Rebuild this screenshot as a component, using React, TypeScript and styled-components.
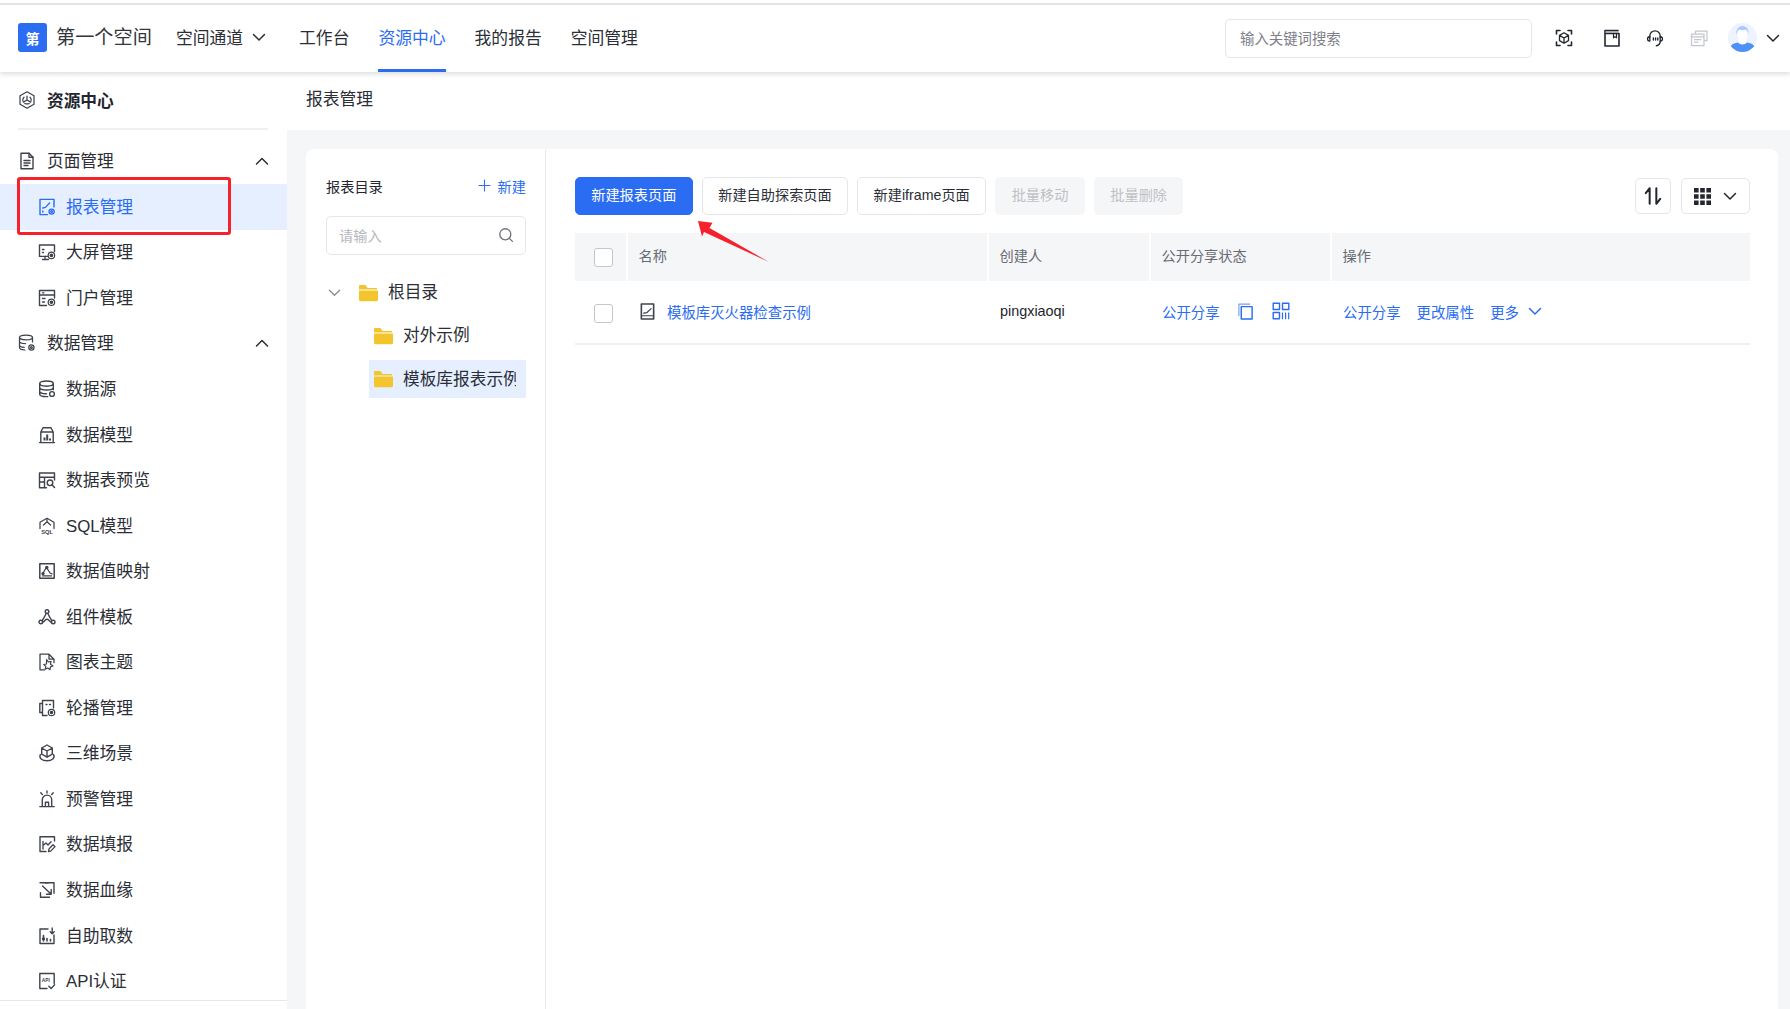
import React from 'react';
import styled, { createGlobalStyle } from 'styled-components';

const FONT = '"Liberation Sans", "Noto Sans CJK SC", sans-serif';
const BLUE = '#2a6cf2';
const TEXT = '#23262e';

const GlobalStyle = createGlobalStyle`
  html, body {
    margin: 0;
    height: 100%;
    overflow: hidden;
    background: #fff;
    font-family: ${FONT};
    color: ${TEXT};
  }
  * { box-sizing: border-box; }
`;

const Page = styled.div`
  position: relative;
  height: 1009px;
  display: flex;
  flex-direction: column;
  overflow: hidden;
`;

const TopBar = styled.header`
  position: relative;
  z-index: 2;
  height: 72px;
  flex: none;
  display: flex;
  align-items: center;
  padding: 3px 4px 0 18px;
  background: #fff;
  box-shadow: inset 0 3px 0 #fff, inset 0 5px 0 #e3e3e3, 0 2px 5px rgba(0, 0, 0, 0.14);
`;

const BrandMark = styled.div`
  width: 29px;
  height: 29px;
  border-radius: 3px;
  background: ${BLUE};
  color: #fff;
  font-size: 14px;
  font-weight: 700;
  display: flex;
  align-items: center;
  justify-content: center;
`;

const BrandName = styled.div`
  margin-left: 9px;
  padding-bottom: 3px;
  font-size: 19.2px;
  color: #33363d;
  white-space: nowrap;
`;

const NavLinks = styled.nav`
  display: flex;
  align-self: stretch;
  margin-left: 24px;
  gap: 29px;
`;

const NavLink = styled.a<{ $active?: boolean }>`
  display: flex;
  align-items: center;
  gap: 9px;
  font-size: 16.8px;
  padding-top: 2px;
  color: ${(p) => (p.$active ? BLUE : '#2b2e36')};
  border-bottom: 3px solid ${(p) => (p.$active ? BLUE : 'transparent')};
  white-space: nowrap;
`;

const NavCaret = styled.span`
  display: flex;
  margin-right: 4px;
`;

const SearchBox = styled.div`
  margin-left: auto;
  width: 307px;
  height: 39px;
  margin-top: 1px;
  border: 1px solid #e5e6eb;
  border-radius: 5px;
  display: flex;
  align-items: center;
  padding: 0 0 1px 14px;
  font-size: 14.4px;
  color: #7d8088;
`;

const TopIcons = styled.div`
  display: flex;
  align-items: center;
  margin-left: 8px;
  flex: none;
`;

const TopIconSlot = styled.div<{ $w: number }>`
  width: ${(p) => p.$w}px;
  display: flex;
  justify-content: center;
  flex: none;
`;

const Body = styled.div`
  flex: 1;
  min-height: 0;
  display: flex;
`;

const Sidebar = styled.aside`
  width: 287px;
  flex: none;
  display: flex;
  flex-direction: column;
  background: #fff;
`;

const SideTitle = styled.div`
  height: 58px;
  flex: none;
  margin: 0 19px 0 18px;
  display: flex;
  align-items: center;
  gap: 11px;
  font-size: 16.7px;
  font-weight: 700;
  border-bottom: 2px solid #eeeff1;
`;

const SideList = styled.div`
  flex: 1;
  min-height: 0;
  padding-top: 8.500px;
  overflow: hidden;
`;

const SideFoot = styled.div`
  height: 9px;
  flex: none;
  border-top: 1px solid #e8e8ea;
`;

const GroupRow = styled.div`
  height: 45.55px;
  display: flex;
  align-items: center;
  padding: 0 18px;
  gap: 11px;
  font-size: 16.7px;
  color: #2b2e36;
`;

const RowLabel = styled.span`
  padding-bottom: 2px;
`;

const GroupArrow = styled.span`
  margin-left: auto;
  display: flex;
`;

const SideRow = styled.div<{ $active?: boolean }>`
  height: 45.55px;
  display: flex;
  align-items: center;
  padding-left: 38px;
  gap: 10px;
  font-size: 16.8px;
  color: ${(p) => (p.$active ? BLUE : '#2b2e36')};
  background: ${(p) => (p.$active ? '#e6efff' : 'transparent')};
`;

const Workspace = styled.main`
  flex: 1;
  min-width: 0;
  display: flex;
  flex-direction: column;
  background: #f5f6f8;
`;

const Crumb = styled.div`
  height: 58px;
  flex: none;
  display: flex;
  align-items: center;
  padding: 0 0 6px 19px;
  background: #fff;
  font-size: 16.8px;
  color: #2b2e36;
`;

const Panel = styled.section`
  flex: 1;
  min-height: 0;
  display: flex;
  margin: 19px 12px 0 19px;
  background: #fff;
  border-radius: 8px 8px 0 0;
`;

const TreeColumn = styled.div`
  width: 240px;
  flex: none;
  padding: 28px 19px 0 20px;
  border-right: 1px solid #e9eaed;
`;

const TreeHead = styled.div`
  height: 20px;
  display: flex;
  align-items: center;
  justify-content: space-between;
  padding-bottom: 3px;
  font-size: 14.2px;
`;

const NewLink = styled.a`
  display: flex;
  align-items: center;
  gap: 6px;
  color: ${BLUE};
`;

const TreeSearch = styled.div`
  margin-top: 19px;
  height: 39px;
  border: 1px solid #e5e6eb;
  border-radius: 5px;
  display: flex;
  align-items: center;
  justify-content: space-between;
  padding: 0 11px 2px 12px;
  font-size: 14.2px;
  color: #b6b8bd;
`;

const TreeList = styled.div`
  margin-top: 18px;
  display: flex;
  flex-direction: column;
  gap: 5.3px;
`;

const TreeRow = styled.div<{ $depth: number; $active?: boolean }>`
  height: 38px;
  margin-left: ${(p) => (p.$depth ? 43 : 0)}px;
  padding-left: ${(p) => (p.$depth ? 5 : 2)}px;
  display: flex;
  align-items: center;
  font-size: 16.7px;
  color: #2b2e36;
  white-space: nowrap;
  overflow: hidden;
  background: ${(p) => (p.$active ? '#e6efff' : 'transparent')};
`;

const TreeCaret = styled.span`
  display: flex;
  color: #8d9097;
  margin-right: 18px;
`;

const TreeText = styled.span`
  margin-left: 10px;
  width: 113px;
  padding-bottom: 2px;
  overflow: hidden;
  flex: none;
`;

const Content = styled.div`
  flex: 1;
  min-width: 0;
  padding: 28px 28px 0 29px;
`;

const Toolbar = styled.div`
  display: flex;
  align-items: center;
  gap: 9.500px;
`;

const Button = styled.button<{ $kind?: 'primary' | 'disabled' }>`
  height: 38px;
  padding: 0 15.200px 4px;
  border-radius: 5px;
  font-family: inherit;
  font-size: 14.2px;
  white-space: nowrap;
  border: 1px solid ${(p) => (p.$kind === 'primary' ? BLUE : p.$kind === 'disabled' ? '#f5f6f8' : '#e5e6eb')};
  background: ${(p) => (p.$kind === 'primary' ? BLUE : p.$kind === 'disabled' ? '#f5f6f8' : '#fff')};
  color: ${(p) => (p.$kind === 'primary' ? '#fff' : p.$kind === 'disabled' ? '#bfc1c6' : '#2b2e36')};
`;

const ToolRight = styled.div`
  margin-left: auto;
  display: flex;
  gap: 10px;
`;

const IconButton = styled.div<{ $w: number }>`
  width: ${(p) => p.$w}px;
  height: 36px;
  border: 1px solid #e5e6eb;
  border-radius: 5px;
  display: flex;
  align-items: center;
  justify-content: center;
  gap: 12px;
  color: #23262e;
`;

const Grid = styled.div`
  display: grid;
  grid-template-columns: 51px 361px 162px 181px 1fr;
`;

const TableHead = styled(Grid)`
  margin-top: 18px;
  height: 48px;
  border-radius: 3px 3px 0 0;
  font-size: 14.2px;
  color: #686b73;
`;

const HeadCell = styled.div`
  background: #f5f6f8;
  display: flex;
  align-items: center;
  padding: 0 0 4px 10.500px;
  border-left: 2px solid #fff;
  &:first-child { border-left: 0; padding: 0 0 0 19px; }
`;

const TableRow = styled(Grid)`
  height: 64px;
  border-bottom: 2px solid #eeeff1;
  font-size: 14.4px;
`;

const Cell = styled.div`
  display: flex;
  align-items: center;
  padding: 0 0 2px 13px;
  gap: 16px;
  &:first-child { padding: 2px 0 0 19px; }
`;

const Checkbox = styled.span`
  width: 19px;
  height: 19px;
  border: 1px solid #c4c6cb;
  border-radius: 3px;
  background: #fff;
`;

const Link = styled.a`
  color: ${BLUE};
  white-space: nowrap;
`;

const NameCell = styled(Cell)`
  gap: 11px;
  padding-left: 13px;
`;

const IconGroup = styled.span`
  display: flex;
  align-items: center;
  gap: 18px;
  margin-left: 1px;
  color: ${BLUE};
`;

const MoreLink = styled(Link)`
  display: flex;
  align-items: center;
  gap: 9px;
`;

const HighlightBox = styled.div`
  position: absolute;
  left: 17px;
  top: 177px;
  width: 214px;
  height: 58px;
  border: 3px solid #f5222d;
  border-radius: 3px;
  pointer-events: none;
  z-index: 3;
`;

const ArrowMark = styled.svg`
  position: absolute;
  left: 694px;
  top: 217px;
  width: 80px;
  height: 50px;
  z-index: 3;
`;

const Svg = styled.svg<{ $size?: number }>`
  width: ${(p) => p.$size ?? 18}px;
  height: ${(p) => p.$size ?? 18}px;
  flex: none;
  fill: none;
  stroke: currentColor;
  stroke-width: 1.25;
  stroke-linecap: round;
  stroke-linejoin: round;
  display: block;
`;

const IconTone = styled.span<{ $color?: string }>`
  display: flex;
  color: ${(p) => p.$color ?? '#3f434d'};
`;

const gear = (cx: number, cy: number) => (
  <>
    <circle cx={cx} cy={cy} r="2.6" />
    <circle cx={cx} cy={cy} r="0.9" />
  </>
);

const icons: Record<string, React.ReactNode> = {
  hex: (
    <>
      <path d="M9 .8 16 4.800v8.400L9 17.200 2 13.200V4.800z" />
      <path d="M9 9V5M9 9l-3.600 2.100M9 9l3.600 2.100" />
      <path d="M6 6.200C4.800 7.400 4.500 9 5 10.200M12 6.200c1.200 1.200 1.500 2.800 1 4M6.800 12.500c1.400.6 3 .6 4.400 0" />
    </>
  ),
  page: (
    <>
      <path d="M3 1.200h8l4 4V16.800H3z" strokeWidth="1.4" />
      <path d="M11 1.200v4h4M6 8.500h6M6 11h6M6 13.500h4" strokeWidth="1.4" />
    </>
  ),
  report: (
    <>
      <path d="M9.500 16.600H2V1.400h14v7.500" strokeWidth="1.4" />
      <path d="M4.800 10l2.600-.6 4.200-4.400M4.800 12.800v1.400" strokeWidth="1.3" />
      {gear(13.600, 13.600)}
    </>
  ),
  screen: (
    <>
      <path d="M9.500 13.400H1.500V2h15v6.500" strokeWidth="1.4" />
      <path d="M4.500 16.500h6M7 13.400v3M4.500 6.500h1.500M4.500 9.500h1" strokeWidth="1.3" />
      <circle cx="13.400" cy="12.400" r="3.200" />
      <circle cx="13.400" cy="12.400" r="1.200" fill="currentColor" />
    </>
  ),
  portal: (
    <>
      <path d="M8.500 16.500H1.500V1.500h15v7.500" strokeWidth="1.4" />
      <path d="M1.500 6h15M4.500 3.800h1.500M4.500 9.500h2.500M4.500 13h2" strokeWidth="1.3" />
      <circle cx="13.400" cy="13.200" r="3.200" />
      <circle cx="13.400" cy="13.200" r="1.200" fill="currentColor" />
    </>
  ),
  dbGear: (
    <>
      <ellipse cx="8" cy="3.400" rx="6.500" ry="2.400" />
      <path d="M1.500 3.400v10.200c0 1.300 2.400 2.300 5.500 2.400M14.500 3.400v4.500M1.500 7.200c0 1.300 2.400 2.400 6 2.400M1.500 11c0 1.200 2 2.200 4.800 2.300" />
      {gear(13.400, 13.400)}
    </>
  ),
  db: (
    <>
      <ellipse cx="8.500" cy="3.600" rx="6.800" ry="2.600" strokeWidth="1.4" />
      <path d="M1.700 3.600v10.600c0 1.400 2.600 2.400 6.800 2.400h1.300M15.300 3.600v6M1.700 7.500c0 1.400 2.800 2.500 6.800 2.500s6.800-1.100 6.800-2.500M1.700 11.300c0 1.400 2.800 2.500 6.800 2.500" strokeWidth="1.4" />
      <circle cx="14" cy="14" r="2.400" strokeWidth="1.4" />
    </>
  ),
  model: (
    <>
      <path d="M1.500 16.600h15M2.800 16.600V6L5 1.800h8L15.200 6v10.600M2.800 6h12.400" strokeWidth="1.4" />
      <path d="M6.500 14.500v-3M9.200 14.500V8.500M12 14.500v-2" strokeWidth="2" strokeLinecap="butt" />
    </>
  ),
  tablePreview: (
    <>
      <path d="M16.500 9V2H1.500v14.800h7M1.500 6.200h15M6.500 6.200v10.600M1.500 11h5" strokeWidth="1.4" />
      <circle cx="12" cy="11.800" r="2.800" strokeWidth="1.4" />
      <path d="M14.200 14l2.300 2.500" strokeWidth="1.5" />
    </>
  ),
  sql: (
    <>
      <path d="M2 11.500V5.200L9 1.200l7 4v6.300" />
      <path d="M5.500 8 9 4.800 12.500 8M9 1.500v3.300" />
      <text x="3.200" y="17.200" fontSize="5.800" fontWeight="700" stroke="none" fill="currentColor" fontFamily={FONT}>SQL</text>
    </>
  ),
  mapping: (
    <>
      <path d="M1.800 1.800h14.400v14.400H1.800z" strokeWidth="1.5" />
      <path d="M4.500 13.800h9M5 11.200 8 6M8.500 5.500l3.500 5.500 2 .8" strokeWidth="1.3" />
      <circle cx="5" cy="11.600" r="1.100" fill="currentColor" />
      <circle cx="8.800" cy="5.500" r="1.100" fill="currentColor" />
    </>
  ),
  nodes: (
    <>
      <circle cx="9" cy="3.600" r="1.800" strokeWidth="1.4" />
      <circle cx="2.800" cy="14" r="1.800" strokeWidth="1.4" />
      <circle cx="15.200" cy="14" r="1.800" strokeWidth="1.4" />
      <path d="M8.200 5.500 6 9.600 4.200 12.600M9.800 5.500 12 9.600l1.800 3M4.800 14.300c1-.2 1.500-1.400 2.600-2.400 1-.8 2.300-.8 3.200 0 1.100 1 1.600 2.200 2.600 2.400" strokeWidth="1.4" />
    </>
  ),
  theme: (
    <>
      <path d="M6.500 16.800H2V1.200h9l5 5v3.500M11 1.200v5h5" strokeWidth="1.3" />
      <path d="M8.500 6.500l1.800 2.300 2.800-.3-.6 2.700 2.500 1.800-2.500.9-.5 2.800-2.200-1.700-2.600 1.100.6-2.700-2-1.900 2.700-.5z" strokeWidth="1.2" />
    </>
  ),
  carousel: (
    <>
      <path d="M9 16.500H4.500V1.500h11V9M4.500 4.500H1.800v9h2.700" strokeWidth="1.4" />
      <path d="M8 5.500h1M11.500 5.500h1" strokeWidth="1.3" />
      <circle cx="13.500" cy="13.500" r="3.200" />
      <circle cx="13.500" cy="13.500" r="1.200" fill="currentColor" />
    </>
  ),
  cube: (
    <>
      <path d="M9 1l5.300 3v6.200L9 13.200 3.700 10.200V4zM3.700 4 9 7l5.300-3M9 7v6.200" strokeWidth="1.4" />
      <path d="M2.400 10.500C.6 14 4 16.800 9 16.800s8.400-2.800 6.600-6.300" strokeWidth="1.4" />
    </>
  ),
  alarm: (
    <>
      <path d="M1.800 16.600h14.400M4.300 16.600V9.800a4.700 4.700 0 0 1 9.400 0v6.800M7.400 16.600v-4.400h3.200v4.400" strokeWidth="1.4" />
      <path d="M9 1v2M2.800 2.800l1.500 1.700M15.200 2.800l-1.500 1.700" strokeWidth="1.4" />
    </>
  ),
  fill: (
    <>
      <path d="M16.500 6V1.800H2V16.500h6" strokeWidth="1.4" />
      <path d="M5 6.500v7.500M5 10.500 8 8l2 2 3-3.200" strokeWidth="1.3" />
      <path d="M10.500 16.500l.5-2.600 4-4.200 2 1.900-4 4.300z" strokeWidth="1.3" />
    </>
  ),
  lineage: (
    <>
      <path d="M11.500 16.200H2.500v-4.500M7 1.800h9v10.500" strokeWidth="1.4" />
      <path d="M2 1.800h8M4.500 5l8.500 8M13.200 8.500v4.800H8.500" strokeWidth="1.4" />
    </>
  ),
  fetch: (
    <>
      <path d="M10 2H2v14.500h14V8" strokeWidth="1.4" />
      <path d="M5.500 14V8.500M9 14v-2.500M12.500 14v-1.500" strokeWidth="1.6" />
      <circle cx="5.500" cy="11.800" r="1" fill="currentColor" />
      <path d="M14.200 1v5.500M12.200 4.800l2 2 2-2" strokeWidth="1.4" />
    </>
  ),
  api: (
    <>
      <path d="M9 16.500H1.800V1.500h14.400v10" strokeWidth="1.4" />
      <text x="3.800" y="10" fontSize="4.800" fontWeight="700" stroke="none" fill="currentColor" fontFamily={FONT}>API</text>
      <path d="M10.800 14.300l2.300 2.300 3.500-3.800" strokeWidth="1.4" />
    </>
  ),
  cubeScan: (
    <>
      <path d="M1.500 5V1.500H5M13 1.500h3.500V5M1.500 13v3.500H5M16.500 13v3.500H13" strokeWidth="1.6" />
      <path d="M9 3.800l4.500 2.600v5.200L9 14.200l-4.500-2.600V6.400zM4.500 6.400 9 9l4.500-2.600M9 9v5.200" strokeWidth="1.3" />
    </>
  ),
  book: (
    <>
      <path d="M2 4.500h14V17H2zM2 4.500V1.500h13" strokeWidth="1.6" />
      <path d="M2.500 3h13" strokeWidth="1" stroke="#8a8d95" />
      <path d="M10.500 4.500v4.300l1.500-1 1.500 1V4.500" strokeWidth="1.200" />
    </>
  ),
  headset: (
    <>
      <path d="M3.800 8.500V7a5.200 5.200 0 0 1 10.400 0v1.500" strokeWidth="1.3" />
      <path d="M3.800 7.500C2.400 7.800 1.500 8.800 1.500 10s.9 2 2.300 2.200zM14.200 7.500c1.400.3 2.300 1.300 2.300 2.500s-.9 2-2.300 2.200z" strokeWidth="1.3" />
      <path d="M14.200 12.500c0 2.400-1.500 3.800-3.800 4.300M7.400 9v2M9.600 9v2M11.800 9v2" strokeWidth="1.4" />
    </>
  ),
  stack: (
    <path d="M5.500 4.800V2H17v9.500h-3M1.500 5H14v11.500H1.500zM1.500 7.800H14M4.500 10.500h6.500M4.500 13.200H8" />
  ),
  copy: (
    <>
      <path d="M2 13.500V1.200h11.500" strokeWidth="1.200" opacity="0.65" />
      <path d="M4.500 3.800h11.500v13.200H4.500z" strokeWidth="1.500" />
    </>
  ),
  qr: (
    <>
      <path d="M1.200 1.200h6.300v6.300H1.200zM10.500 1.200h6.300v6.300h-6.300zM1.200 10.500h6.300v6.300H1.200z" strokeWidth="1.400" />
      <path d="M10.500 10.500v6.800M13.600 10.500v6.800M16.700 10.500v6.800" strokeWidth="1.200" strokeLinecap="butt" />
    </>
  ),
  search: (
    <>
      <circle cx="8.200" cy="8.200" r="6.200" strokeWidth="1.500" />
      <path d="M12.800 12.800 16.200 16.200" strokeWidth="1.500" />
    </>
  ),
  plus: <path d="M9 2.500v13M2.500 9h13" strokeWidth="1.300" />,
  sheet: (
    <>
      <path d="M2.500 1h13v16h-13z" strokeWidth="1.700" />
      <path d="M2.500 13.500h13M5 10.800l3.200-.5L12.800 6" strokeWidth="1.300" />
    </>
  ),
};

const Icon: React.FC<{ name: string; size?: number }> = ({ name, size }) => (
  <Svg viewBox="0 0 18 18" $size={size}>
    {icons[name]}
  </Svg>
);

const Chevron: React.FC<{ up?: boolean; size?: number }> = ({ up, size = 14 }) => (
  <Svg viewBox="0 0 14 14" $size={size}>
    <path d={up ? 'M1.500 10 7 4.500l5.500 5.500' : 'M1.500 4.500 7 10l5.500-5.500'} strokeWidth="1.500" />
  </Svg>
);

const FolderSvg = styled.svg`
  width: 19px;
  height: 19px;
  flex: none;
`;

const Folder: React.FC = () => (
  <FolderSvg viewBox="0 0 19 19">
    <path d="M0 3.200C0 2.500.5 2 1.200 2h4.600c.5 0 .9.2 1.200.6L8.600 5H18v1.400H0z" fill="#f3c52c" />
    <path d="M0 7.400h19v9.400c0 .9-.6 1.400-1.400 1.400H1.400C.6 18.200 0 17.700 0 16.800z" fill="#f3c52c" />
  </FolderSvg>
);

const Avatar: React.FC = () => (
  <svg viewBox="0 0 29 29" width="29" height="29">
    <defs>
      <clipPath id="avatar-clip">
        <circle cx="14.500" cy="14.500" r="14.500" />
      </clipPath>
    </defs>
    <g clipPath="url(#avatar-clip)">
      <rect width="29" height="29" fill="#edf3ff" />
      <path d="M1 29c0-6 3-8.500 9-9.500 2 2.500 7 2.500 9 0 6 1 9 3.500 9 9.500z" fill="#4d90f8" />
      <path d="M10.800 14h7.400v5.500c-1.800 2.200-5.600 2.200-7.400 0z" fill="#fff" />
      <ellipse cx="14.500" cy="11.500" rx="5" ry="6.500" fill="#fff" />
      <path d="M8.500 12c-1-5.500 2-9 6-9s7 3.500 6 9c-.5-3-1-4.800-2.500-5.500-2.500 1-5 1-7 0-1.500.7-2 2.500-2.500 5.500z" fill="#a9c8ff" />
    </g>
  </svg>
);

const pageItems = [
  { label: '报表管理', icon: 'report', active: true },
  { label: '大屏管理', icon: 'screen' },
  { label: '门户管理', icon: 'portal' },
];

const dataItems = [
  { label: '数据源', icon: 'db' },
  { label: '数据模型', icon: 'model' },
  { label: '数据表预览', icon: 'tablePreview' },
  { label: 'SQL模型', icon: 'sql' },
  { label: '数据值映射', icon: 'mapping' },
  { label: '组件模板', icon: 'nodes' },
  { label: '图表主题', icon: 'theme' },
  { label: '轮播管理', icon: 'carousel' },
  { label: '三维场景', icon: 'cube' },
  { label: '预警管理', icon: 'alarm' },
  { label: '数据填报', icon: 'fill' },
  { label: '数据血缘', icon: 'lineage' },
  { label: '自助取数', icon: 'fetch' },
  { label: 'API认证', icon: 'api' },
];

const SideItem: React.FC<{ label: string; icon: string; active?: boolean }> = ({ label, icon, active }) => (
  <SideRow $active={active}>
    <IconTone $color={active ? BLUE : undefined}>
      <Icon name={icon} />
    </IconTone>
    <RowLabel>{label}</RowLabel>
  </SideRow>
);

const App: React.FC = () => {
  return (
    <Page>
      <GlobalStyle />
      <TopBar>
        <BrandMark>第</BrandMark>
        <BrandName>第一个空间</BrandName>
        <NavLinks>
          <NavLink>
            空间通道
            <NavCaret><Chevron /></NavCaret>
          </NavLink>
          <NavLink>工作台</NavLink>
          <NavLink $active>资源中心</NavLink>
          <NavLink>我的报告</NavLink>
          <NavLink>空间管理</NavLink>
        </NavLinks>
        <SearchBox>输入关键词搜索</SearchBox>
        <TopIcons>
          <TopIconSlot $w={48}>
            <IconTone $color="#23262e"><Icon name="cubeScan" /></IconTone>
          </TopIconSlot>
          <TopIconSlot $w={48}>
            <IconTone $color="#23262e"><Icon name="book" /></IconTone>
          </TopIconSlot>
          <TopIconSlot $w={38}>
            <IconTone $color="#23262e"><Icon name="headset" /></IconTone>
          </TopIconSlot>
          <TopIconSlot $w={50}>
            <IconTone $color="#c4c6cb"><Icon name="stack" /></IconTone>
          </TopIconSlot>
          <TopIconSlot $w={36}>
            <Avatar />
          </TopIconSlot>
          <TopIconSlot $w={26}>
            <IconTone $color="#23262e"><Chevron /></IconTone>
          </TopIconSlot>
        </TopIcons>
      </TopBar>
      <Body>
        <Sidebar>
          <SideTitle>
            <IconTone><Icon name="hex" /></IconTone>
            资源中心
          </SideTitle>
          <SideList>
            <GroupRow>
              <IconTone><Icon name="page" /></IconTone>
              <RowLabel>页面管理</RowLabel>
              <GroupArrow><Chevron up /></GroupArrow>
            </GroupRow>
            {pageItems.map((item) => (
              <SideItem key={item.label} {...item} />
            ))}
            <GroupRow>
              <IconTone><Icon name="dbGear" /></IconTone>
              <RowLabel>数据管理</RowLabel>
              <GroupArrow><Chevron up /></GroupArrow>
            </GroupRow>
            {dataItems.map((item) => (
              <SideItem key={item.label} {...item} />
            ))}
          </SideList>
          <SideFoot />
        </Sidebar>
        <Workspace>
          <Crumb>报表管理</Crumb>
          <Panel>
            <TreeColumn>
              <TreeHead>
                报表目录
                <NewLink>
                  <Icon name="plus" size={15} />
                  新建
                </NewLink>
              </TreeHead>
              <TreeSearch>
                请输入
                <IconTone $color="#6f727a"><Icon name="search" size={16} /></IconTone>
              </TreeSearch>
              <TreeList>
                <TreeRow $depth={0}>
                  <TreeCaret><Chevron size={13} /></TreeCaret>
                  <Folder />
                  <TreeText>根目录</TreeText>
                </TreeRow>
                <TreeRow $depth={1}>
                  <Folder />
                  <TreeText>对外示例</TreeText>
                </TreeRow>
                <TreeRow $depth={1} $active>
                  <Folder />
                  <TreeText>模板库报表示例</TreeText>
                </TreeRow>
              </TreeList>
            </TreeColumn>
            <Content>
              <Toolbar>
                <Button $kind="primary">新建报表页面</Button>
                <Button>新建自助探索页面</Button>
                <Button>新建iframe页面</Button>
                <Button $kind="disabled">批量移动</Button>
                <Button $kind="disabled">批量删除</Button>
                <ToolRight>
                  <IconButton $w={36}>
                    <Svg viewBox="0 0 18 18" $size={20}>
                      <path d="M6 16V2L2.500 6.500M12 2v14l3.500-4.500" strokeWidth="1.800" />
                    </Svg>
                  </IconButton>
                  <IconButton $w={69}>
                    <svg viewBox="0 0 17 17" width="17" height="17" fill="currentColor">
                      <path d="M0 0h4.600v4.600H0zM6.200 0h4.600v4.600H6.200zM12.400 0H17v4.600h-4.600zM0 6.200h4.600v4.600H0zM6.200 6.200h4.600v4.600H6.200zM12.400 6.200H17v4.600h-4.600zM0 12.400h4.600V17H0zM6.200 12.400h4.600V17H6.200zM12.400 12.400H17V17h-4.600z" />
                    </svg>
                    <Chevron />
                  </IconButton>
                </ToolRight>
              </Toolbar>
              <TableHead>
                <HeadCell><Checkbox /></HeadCell>
                <HeadCell>名称</HeadCell>
                <HeadCell>创建人</HeadCell>
                <HeadCell>公开分享状态</HeadCell>
                <HeadCell>操作</HeadCell>
              </TableHead>
              <TableRow>
                <Cell><Checkbox /></Cell>
                <NameCell>
                  <IconTone><Icon name="sheet" size={17} /></IconTone>
                  <Link>模板库灭火器检查示例</Link>
                </NameCell>
                <Cell>pingxiaoqi</Cell>
                <Cell>
                  <Link>公开分享</Link>
                  <IconGroup>
                    <Icon name="copy" size={17} />
                    <Icon name="qr" size={18} />
                  </IconGroup>
                </Cell>
                <Cell>
                  <Link>公开分享</Link>
                  <Link>更改属性</Link>
                  <MoreLink>
                    更多
                    <Chevron />
                  </MoreLink>
                </Cell>
              </TableRow>
            </Content>
          </Panel>
        </Workspace>
      </Body>
      <HighlightBox />
      <ArrowMark viewBox="0 0 80 50">
        <path d="M4 4 18.500 5.800 15.500 11 75 45 10 15 8 19.500z" fill="#f5222d" />
      </ArrowMark>
    </Page>
  );
};

export default App;
